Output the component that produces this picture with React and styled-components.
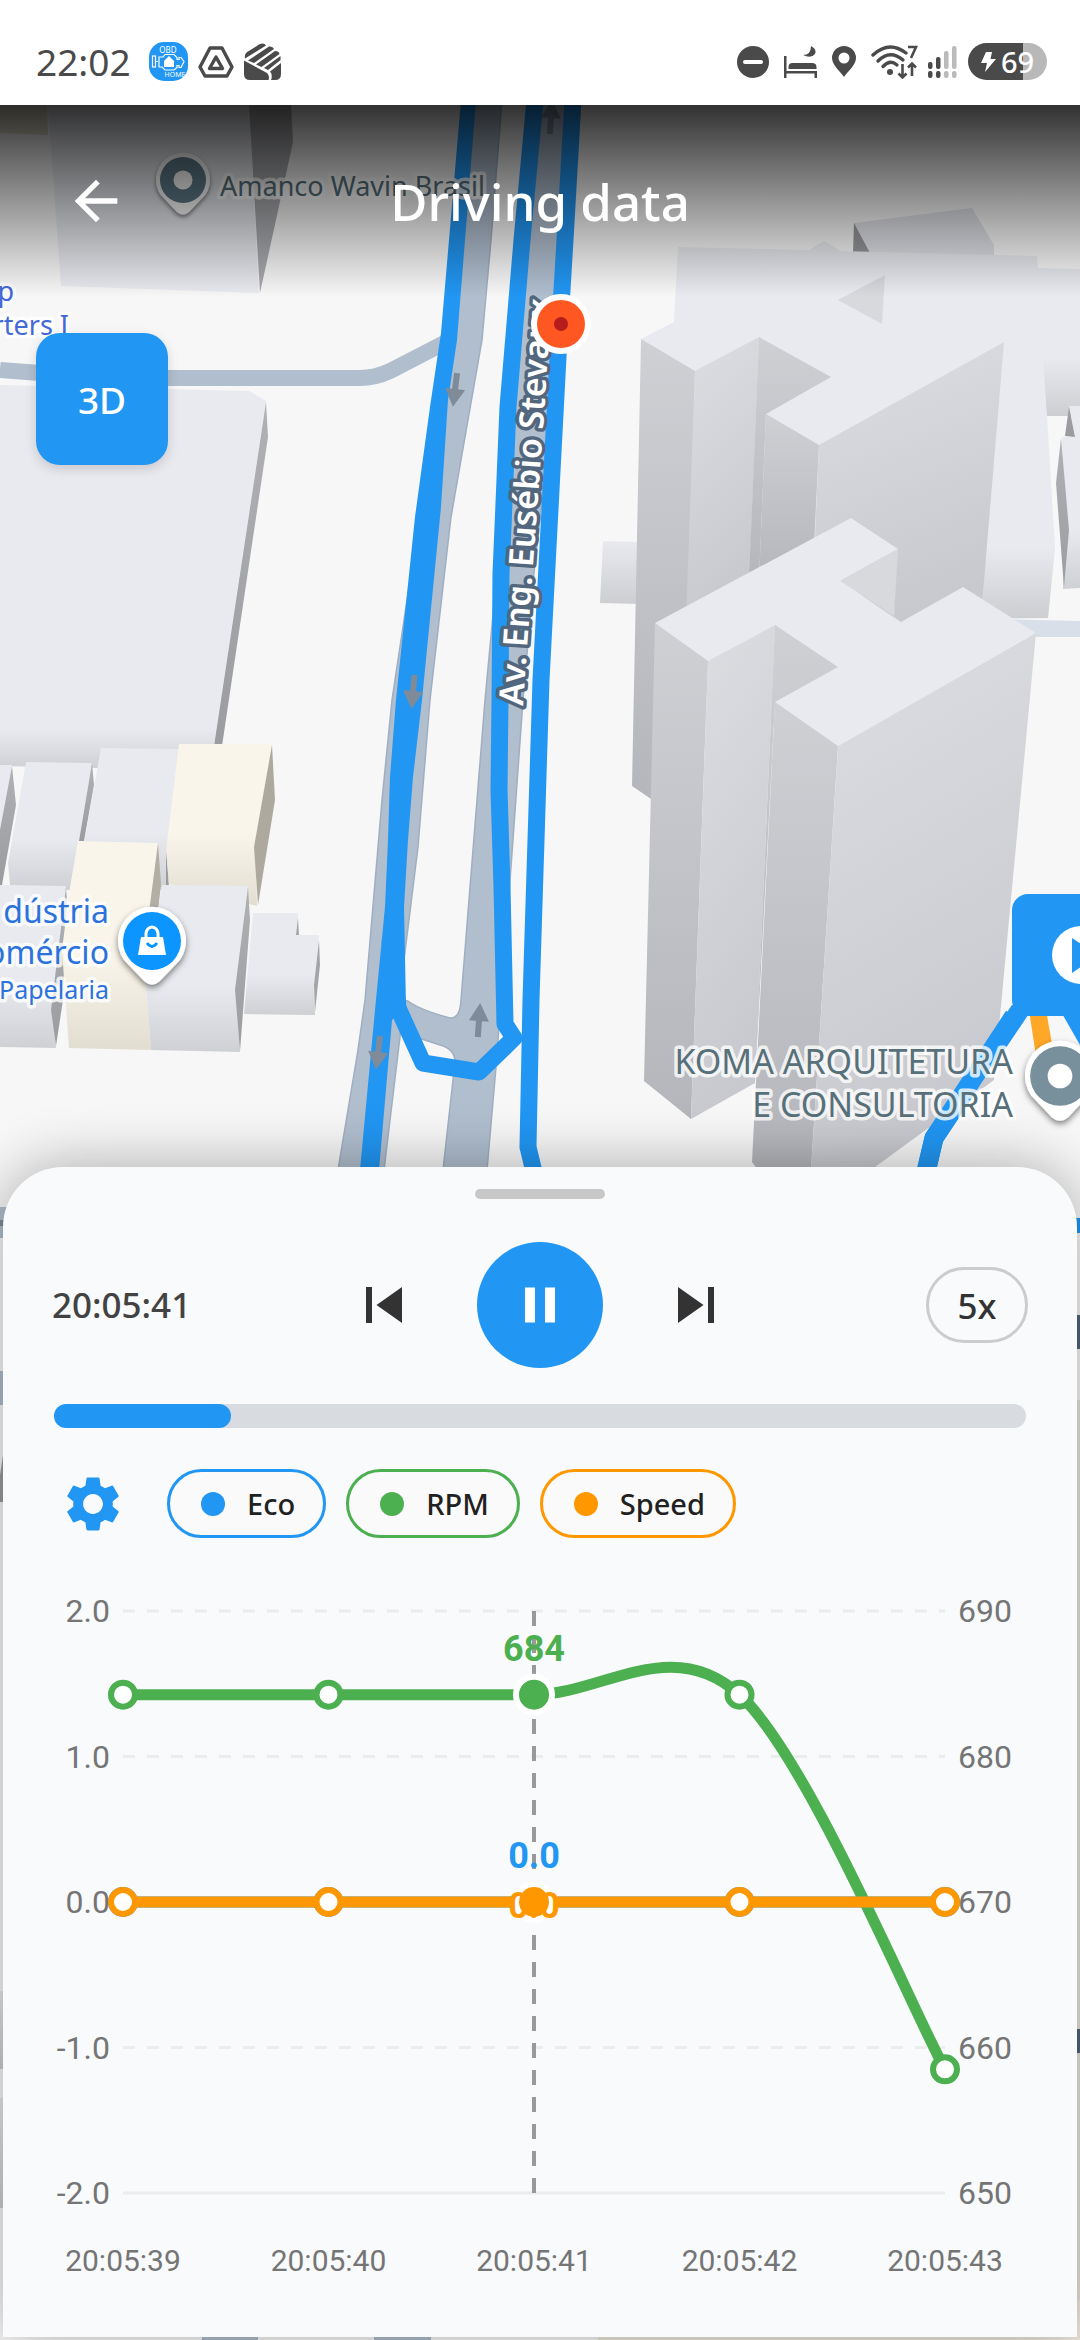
import React, { useState } from 'react';
import styled, { createGlobalStyle } from 'styled-components';
import { MdArrowBack, MdPause, MdPlayArrow, MdSettings, MdSkipNext, MdSkipPrevious } from 'react-icons/md';

const BLUE = '#2196f3';
const GREEN = '#4caf50';
const ORANGE = '#ff9800';

// -----------------------------------------------------------------------------------------
// ------------------------------------- Status bar ----------------------------------------
// -----------------------------------------------------------------------------------------

const ObdIcon = () => (
  <svg width="39" height="39" viewBox="0 0 39 39" aria-hidden="true">
    <rect width="39" height="39" rx="15" fill={BLUE} />
    <g fill="none" stroke="#fff" strokeWidth="1.2">
      <rect x="3.5" y="14" width="3" height="11" />
      <path d="M7 19.5h2M10 15h4l2-2.500h9l3 3v2h2v-2h2l3 4-3 6h-2v-2h-2v2l-3 2.500H16l-3-3h-3z" />
    </g>
    <path d="M20 14l5 5v6H15v-6z" fill="#fff" />
    <text x="19" y="10.500" textAnchor="middle" fontSize="8" fill="#fff">OBD</text>
    <text x="26" y="35" textAnchor="middle" fontSize="7" fill="#fff">HOME</text>
  </svg>
);

const DriveIcon = () => (
  <svg width="36" height="32" viewBox="0 0 36 32" fill="none" stroke="#4a4a4a" strokeLinejoin="round" aria-hidden="true">
    <path d="M12 2h12l10 19-5 9H7L2 21z" strokeWidth="3.400" />
    <path d="M18 11l6.500 11.500h-13z" strokeWidth="3.400" />
  </svg>
);

const HandIcon = () => (
  <svg width="37" height="37" viewBox="0 0 37 37" fill="#4a4a4a" aria-hidden="true">
    <path d="M1 15.500Q0 11 4 8.500L15 1.500q5-2.500 7 1z" />
    <path d="M4 17.500L25 3.500q4-.5 5 2.500L10 20z" />
    <path d="M12 21.500L31 8q4 0 4.500 3L17.500 24z" />
    <path d="M20 25L36.500 13v4L24 27z" />
    <path d="M0 17.500L23 30q3 3 1.500 7H6q-6 0-6-6z" />
    <path d="M26 28.500L37 20v11q0 6-6 6h-4q2-5-1-8.500z" />
  </svg>
);

const DndIcon = () => (
  <svg width="32" height="32" viewBox="0 0 32 32" aria-hidden="true">
    <circle cx="16" cy="16" r="16" fill="#4a4a4a" />
    <rect x="6" y="14" width="20" height="4" rx="2" fill="#fff" />
  </svg>
);

const BedIcon = () => (
  <svg width="33" height="32" viewBox="0 0 33 32" fill="#4a4a4a" aria-hidden="true">
    <path d="M0 10h2.500v15H33v7h-2.500v-4.500h-28V32H0z" />
    <path d="M4.500 23v-2q0-4 4-4H28q4.500 0 4.500 4v2z" />
    <path d="M27 0q6 3 4 8-4 5-12 1 8 0 8-9z" />
  </svg>
);

const PinIcon = () => (
  <svg width="24" height="31" viewBox="0 0 24 31" aria-hidden="true">
    <path d="M12 0a12 12 0 0 1 12 12c0 7-8 13-12 19C8 25 0 19 0 12A12 12 0 0 1 12 0z" fill="#4a4a4a" />
    <circle cx="12" cy="12" r="5.500" fill="#fff" />
  </svg>
);

const WifiIcon = () => (
  <svg width="47" height="36" viewBox="0 0 47 36" fill="none" stroke="#4a4a4a" aria-hidden="true">
    <g strokeWidth="3.400" strokeLinecap="round">
      <path d="M2 11Q18-4 35 9" />
      <path d="M7 17Q19 5 32 16" />
      <path d="M12 22.500Q19 15 26 21" />
    </g>
    <circle cx="19" cy="28" r="3" fill="#4a4a4a" stroke="none" />
    <path d="M37 3h8l-5 11" strokeWidth="2.600" />
    <path d="M31.500 20v13M27.500 29.500l4 4 4-4M41 32V20M37 23.500l4-4 4 4" strokeWidth="2.600" />
  </svg>
);

const SIGNAL_BARS = [
  { x: 0, top: 16, color: '#4a4a4a' },
  { x: 8, top: 11, color: '#4a4a4a' },
  { x: 16, top: 5, color: '#bababa' },
  { x: 24, top: 0, color: '#bababa' },
];

const SignalIcon = () => (
  <svg width="30" height="32" viewBox="0 0 30 32" aria-hidden="true">
    {SIGNAL_BARS.map(({ x, top, color }) => (
      <g key={x} fill={color}>
        <rect x={x} y={top} width="4.500" height={23 - top} rx="2" />
        <rect x={x} y="25" width="4.500" height="7" rx="2" />
      </g>
    ))}
  </svg>
);

const StatusBar = () => (
  <StatusWrapper>
    <StatusLeft>
      <Clock>22:02</Clock>
      <ObdIcon />
      <DriveIcon />
      <HandIcon />
    </StatusLeft>
    <StatusRight>
      <DndIcon />
      <BedIcon />
      <PinIcon />
      <Connectivity>
        <WifiIcon />
        <SignalIcon />
        <Battery>
          <svg width="15" height="20" viewBox="0 0 15 20" fill="#fff" aria-hidden="true">
            <path d="M5 0h6L9.500 7H15L4 20l2-9H0z" />
          </svg>
          69
        </Battery>
      </Connectivity>
    </StatusRight>
  </StatusWrapper>
);

// -----------------------------------------------------------------------------------------
// ----------------------------------------- Map -------------------------------------------
// -----------------------------------------------------------------------------------------

const ROOF = '#e8eaef';

const ARROWS = [
  { x: 455, y: 390, turn: 187 },
  { x: 413, y: 692, turn: 185 },
  { x: 378, y: 1053, turn: 187 },
  { x: 479, y: 1020, turn: 4 },
  { x: 551, y: 117, turn: 4 },
];

const PlacePin = ({ x, y, r, color, children }) => (
  <g transform={`translate(${x} ${y}) scale(${r / 34})`} filter="url(#pinShadow)">
    <path d="M-28 19A34 34 0 1 1 28 19L8 40Q0 47-8 40z" fill="#fff" />
    <circle r="29" fill={color} />
    {children}
  </g>
);

const Map = () => (
  <MapCanvas viewBox="0 105 1080 2235" preserveAspectRatio="xMidYMin slice" role="img" aria-label="Route map">
    <defs>
      <linearGradient id="frontFace" x1="0" y1="0" x2="0" y2="1">
        <stop offset="0.6" stopColor={ROOF} />
        <stop offset="1" stopColor="#cfd0d4" />
      </linearGradient>
      <linearGradient id="bigFront" x1="0" y1="0" x2="0" y2="1">
        <stop offset="0.9" stopColor={ROOF} />
        <stop offset="1" stopColor="#cfd0d4" />
      </linearGradient>
      <linearGradient id="creamFace" x1="0" y1="0" x2="0" y2="1">
        <stop offset="0.55" stopColor="#f9f5ea" />
        <stop offset="1" stopColor="#e2ddd1" />
      </linearGradient>
      <linearGradient id="shade" x1="0" y1="0" x2="0" y2="1">
        <stop offset="0" stopColor={ROOF} />
        <stop offset="1" stopColor="#cdced2" />
      </linearGradient>
      <linearGradient id="sideWall" x1="0" y1="0" x2="0" y2="1">
        <stop offset="0" stopColor="#b0b1b5" />
        <stop offset="1" stopColor="#9b9ca0" />
      </linearGradient>
      <linearGradient id="towerDark" x1="0" y1="0" x2="0" y2="1">
        <stop offset="0" stopColor="#cfd0d4" />
        <stop offset="1" stopColor="#b5b6bb" />
      </linearGradient>
      <linearGradient id="towerLight" x1="0" y1="0" x2="0.25" y2="1">
        <stop offset="0" stopColor="#dddee2" />
        <stop offset="1" stopColor="#c8c9ce" />
      </linearGradient>
      <filter id="pinShadow" x="-30%" y="-30%" width="160%" height="160%">
        <feDropShadow dx="0" dy="3" stdDeviation="3" floodOpacity="0.5" />
      </filter>
      <path id="avenue" d="M523 706L533 565L543 430L552 290" />
    </defs>
    <rect y="105" width="1080" height="2235" fill="#f7f7f7" />

    {/* blocks that stay mostly under the sheet */}
    <rect x="1040" y="1400" width="40" height="940" fill="#e9e5da" />
    <rect x="598" y="2300" width="482" height="40" fill="#efe9dc" />
    <rect x="0" y="1207" width="60" height="31" fill="#b0bece" />
    <rect x="0" y="1220" width="60" height="6" fill="#7f8b99" />
    <rect x="0" y="1371" width="60" height="34" fill="#b0bece" />
    <path d="M0 1475L3 1455V1502H0z" fill="#9b9ca0" />
    <rect x="0" y="1991" width="30" height="78" fill="url(#shade)" />
    <rect x="0" y="2098" width="30" height="110" fill="url(#shade)" />
    <path d="M202 2300h56v40h-56zM374 2300h57v40h-57z" fill="#b0bece" />
    <rect x="1040" y="1218" width="40" height="15" fill={BLUE} />
    <rect x="1040" y="1315" width="40" height="34" fill="#52667d" />
    <rect x="1040" y="2029" width="40" height="24" fill="#52667d" />

    {/* roads */}
    <path d="M0 370L40 373L168 378H360Q375 378 390 371L450 340" fill="none" stroke="#b0bece" strokeWidth="16" />
    <g fill="#b0bece" stroke="#9fafc1" strokeWidth="1.500">
      <path d="M465 100L502 100L491 240L482 340L451 517L430 700L418 847L404 960L400 1037L384 1170H338L358 1050L365 1000L382 800L392 700L416 540L442 400z" />
      <path d="M530 100H566L559 240L553 400L534 573L523 700L511 867L496 1067L487 1170H443L455 1062Q455 1049 440 1045L400 1032V1000L408 1001Q420 1010 450 1018Q460 1019 461 1000L485 700L500 540L518 240z" />
    </g>
    <path d="M1000 619L1080 621V637H1000z" fill="#d9dfe9" />

    {/* recorded route */}
    <g fill="none" stroke={BLUE} strokeLinejoin="round">
      <path d="M535 100L522 240L508 407L503 527L501 573L500 700L499 790L502 887L505 1024L514 1038L479 1072L423 1063L398 1008L390 940" strokeWidth="17" />
      <path d="M573 100L565 240L558 357L541 680L531 1000L528 1147L534 1172" strokeWidth="17" />
      <path d="M1020 1010L934 1138L926 1172" strokeWidth="19" />
    </g>
    <path d="M461 100H476L465 240L457 340L448 400L441 507L422 700L413 777L408 840L404 907L406 1007L392 1020L379 1170H360L375 1010L385 907L388 840L390 777L396 700L415 517L430 407L441 333L449 240z" fill={BLUE} />
    <path d="M1029 1010H1046L1053 1050L1036 1056z" fill="#ffa726" />
    <path d="M1060 1010H1080V1045z" fill={BLUE} />
    {ARROWS.map(({ x, y, turn }) => (
      <path key={y} d="M0-17L10 1H3V17H-3V1H-10z" transform={`translate(${x} ${y}) rotate(${turn})`} fill="#7f8b99" />
    ))}

    {/* buildings on the left */}
    <path d="M0 105H47L48 135L0 133z" fill="#e0dac6" />
    <path d="M48 105H249L259 293L61 286z" fill={ROOF} />
    <path d="M249 105H291L293 142L260 293z" fill="#a9aaae" />
    <path d="M0 385L249 391L266 401L214 744L98 768L0 766z" fill="url(#bigFront)" />
    <path d="M266 402L268 437L222 746H214z" fill="url(#sideWall)" />
    <path d="M0 765H12L0 885z" fill={ROOF} />
    <path d="M12 766L16 805L2 885H0V830z" fill="url(#sideWall)" />
    <path d="M26 762L92 763L79 841L70 890L10 885L8 863z" fill="url(#frontFace)" />
    <path d="M92 763L94 785L84 841H79z" fill="url(#sideWall)" />
    <path d="M101 748L179 749L168 890L160 890L158 843H84z" fill="url(#frontFace)" />
    <path d="M166 845L169 889H166z" fill="#9b9ca0" />
    <path d="M179 744H272L255 847L257 906L169 884L166 850z" fill="url(#creamFace)" />
    <path d="M272 745L275 800L258 905L254 847z" fill="#aea99f" />
    <path d="M0 885L66 886L52 1010L56 1048L0 1047z" fill="url(#frontFace)" />
    <path d="M66 887L67 900L63 1000L56 1046L51 1010z" fill="url(#sideWall)" />
    <path d="M78 841L158 843L146 987L151 1050L69 1048L62 950L70 887z" fill="url(#creamFace)" />
    <path d="M158 843L161 884L158 912H149z" fill="#b4afa5" />
    <path d="M162 885L248 886L236 993L240 1052L151 1050L146 987z" fill="url(#frontFace)" />
    <path d="M253 913H298V935H319L314 990L315 1015L244 1014z" fill="url(#frontFace)" />
    <path d="M248 887L250 920L240 1051L235 990z" fill="url(#sideWall)" />
    <path d="M298 918L299 935H296zM319 940L320 965L315 1012L314 985z" fill="#a3a4a8" />

    {/* towers on the right */}
    <path d="M854 223L972 208L994 245V260L868 256z" fill="#e0e1e7" />
    <path d="M854 223L870 253H853z" fill="#94959a" />
    <path d="M603 541L640 542V604L600 603z" fill="url(#shade)" />
    <path d="M678 247L809 250L824 241L841 251L1037 256L1038 268L1080 269V416H1047L1055 547L1048 618L1015 619L960 610L700 600L641 339L674 322z" fill={ROOF} />
    <path d="M1043 357H1080V416H1047z" fill="url(#shade)" />
    <path d="M985 547H1055L1048 618H982z" fill="url(#shade)" />
    <path d="M1069 406H1080V437H1075z" fill={ROOF} />
    <path d="M1069 407L1075 437L1065 436z" fill="#9b9ca0" />
    <path d="M1062 437H1080V588L1063 589z" fill="url(#frontFace)" />
    <path d="M1061 438L1069 530L1064 587L1056 483z" fill="url(#sideWall)" />
    <path d="M838 300L885 275L882 324z" fill="#d8d9dd" />
    <path d="M641 339L695 371L688 640L651 799L632 786z" fill="url(#towerDark)" />
    <path d="M695 371L759 337L749 590L686 620z" fill="url(#towerLight)" />
    <path d="M759 337L831 377L766 414L759 580L749 580z" fill="url(#towerDark)" />
    <path d="M766 414L819 445L814 545L759 580z" fill="url(#towerDark)" />
    <path d="M819 445L1004 342L982 605L902 625L814 560z" fill="url(#towerLight)" />
    <path d="M655 623L851 518L898 549L840 581L901 622L963 587L1036 633L838 746L700 700z" fill={ROOF} />
    <path d="M898 549L894 616L840 581z" fill="#d8d9dd" />
    <path d="M655 623L708 661L691 1119L644 1081z" fill="url(#towerDark)" />
    <path d="M708 661L775 625L755 1083L691 1119z" fill="url(#towerLight)" />
    <path d="M775 625L838 667L775 702L755 1083z" fill="url(#towerDark)" />
    <path d="M775 702L838 746L811 1170H758L752 1162z" fill="url(#towerDark)" />
    <path d="M838 746L1036 633L994 1080L871 1170H811z" fill="url(#towerLight)" />
    <path d="M1014 1016L934 1138L926 1172" fill="none" stroke={BLUE} strokeWidth="19" />

    {/* labels */}
    <StreetLabel>
      <textPath href="#avenue">Av. Eng. Eusébio Stevaux</textPath>
    </StreetLabel>
    <MapLabel $size={27} $color="#57707a" x="220" y="196">Amanco Wavin Brasil</MapLabel>
    <MapLabel $size={27} $color="#4468d6" x="14" y="301" textAnchor="end">p</MapLabel>
    <MapLabel $size={27} $color="#4468d6" x="69" y="335" textAnchor="end">rters I</MapLabel>
    <MapLabel $size={32} $color="#2b72dc" x="109" y="923" textAnchor="end">dústria</MapLabel>
    <MapLabel $size={32} $color="#2b72dc" x="109" y="964" textAnchor="end">omércio</MapLabel>
    <MapLabel $size={25} $color="#2b72dc" x="109" y="999" textAnchor="end">Papelaria</MapLabel>
    <MapLabel $size={34} $color="#57707a" x="1013" y="1074" textAnchor="end">KOMA ARQUITETURA</MapLabel>
    <MapLabel $size={34} $color="#57707a" x="1013" y="1117" textAnchor="end">E CONSULTORIA</MapLabel>

    {/* markers */}
    <PlacePin x={183} y={180} r={27} color="#607d8b">
      <circle r="12" fill="#fff" />
    </PlacePin>
    <PlacePin x={152} y={941} r={34} color="#0a95ff">
      <path d="M-11-4H11L14 14H-14z" fill="#fff" />
      <path d="M-6-3V-7a6 7 0 0 1 12 0V-3" fill="none" stroke="#fff" strokeWidth="3" />
      <path d="M-5 2Q0 9 5 2" fill="none" stroke="#0a95ff" strokeWidth="3" />
    </PlacePin>
    <rect x="1012" y="894" width="138" height="122" rx="16" fill={BLUE} />
    <circle cx="1081" cy="955" r="29" fill="#fff" />
    <path d="M1072 938L1098 955L1072 973z" fill={BLUE} />
    <PlacePin x={1060} y={1076} r={35} color="#78909c">
      <circle r="12" fill="#fff" />
    </PlacePin>
    <circle cx="561" cy="324" r="30" fill="#fff" />
    <circle cx="561" cy="324" r="24" fill="#ff5722" />
    <circle cx="561" cy="324" r="7" fill="#b71c1c" />
  </MapCanvas>
);

// -----------------------------------------------------------------------------------------
// ---------------------------------------- Chart ------------------------------------------
// -----------------------------------------------------------------------------------------

const TIMES = ['20:05:39', '20:05:40', '20:05:41', '20:05:42', '20:05:43'];
const LEFT_TICKS = ['2.0', '1.0', '0.0', '-1.0', '-2.0'];
const RIGHT_TICKS = [690, 680, 670, 660, 650];
const PLOT = { left: 120, right: 942, top: 24, bottom: 606 };
const SMOOTHNESS = 0.33;
const CURSOR = 2;

const colX = (i) => PLOT.left + ((PLOT.right - PLOT.left) / 4) * i;
const rowY = (i) => PLOT.top + ((PLOT.bottom - PLOT.top) / 4) * i;
const scaleY = (value, min, max) => PLOT.bottom - ((value - min) / (max - min)) * (PLOT.bottom - PLOT.top);

const SERIES = [
  { id: 'eco', label: '0.0', labelDy: -34, color: BLUE, values: [0, 0, 0, 0, 0], min: -2, max: 2 },
  { id: 'rpm', label: '684', labelDy: -34, color: GREEN, values: [684.25, 684.25, 684.25, 684.25, 658.5], min: 650, max: 690 },
  { id: 'speed', label: '0.0', labelDy: 16, color: ORANGE, values: [0, 0, 0, 0, 0], min: -2, max: 2 },
];

const curve = (points) => {
  const pull = (i) => {
    const prev = points[i - 1] || points[i];
    const next = points[i + 1] || points[i];
    return { x: ((next.x - prev.x) / 2) * SMOOTHNESS, y: ((next.y - prev.y) / 2) * SMOOTHNESS };
  };
  return points.reduce((d, p, i) => {
    if (i === 0) return `M${p.x} ${p.y}`;
    const before = points[i - 1];
    const a = pull(i - 1);
    const b = pull(i);
    return `${d}C${before.x + a.x} ${before.y + a.y} ${p.x - b.x} ${p.y - b.y} ${p.x} ${p.y}`;
  }, '');
};

const Chart = () => {
  const lines = SERIES.map((s) => ({
    ...s,
    points: s.values.map((value, i) => ({ x: colX(i), y: scaleY(value, s.min, s.max) })),
  }));

  return (
    <ChartCanvas viewBox="0 0 1074 700" role="img" aria-label="Eco, RPM and Speed over time">
      {LEFT_TICKS.map((tick, i) => (
        <g key={tick}>
          <line
            x1={PLOT.left}
            x2={PLOT.right}
            y1={rowY(i)}
            y2={rowY(i)}
            stroke="#ebecec"
            strokeWidth="3"
            strokeDasharray={i === 4 ? undefined : '12 12'}
          />
          <AxisLabel x="107" y={rowY(i) + 11} textAnchor="end">{tick}</AxisLabel>
          <AxisLabel x="955" y={rowY(i) + 11}>{RIGHT_TICKS[i]}</AxisLabel>
        </g>
      ))}
      {TIMES.map((time, i) => (
        <AxisLabel key={time} $small x={colX(i)} y="684" textAnchor="middle">{time}</AxisLabel>
      ))}
      {lines.map(({ id, color, points }) => (
        <g key={id}>
          <path d={curve(points)} fill="none" stroke={color} strokeWidth="11" />
          {points.map((p, i) => i !== CURSOR && (
            <circle key={p.x} cx={p.x} cy={p.y} r="12" fill="#fff" stroke={color} strokeWidth="6" />
          ))}
        </g>
      ))}
      <line
        x1={colX(CURSOR)}
        x2={colX(CURSOR)}
        y1={PLOT.top}
        y2={PLOT.bottom}
        stroke="#999"
        strokeWidth="4"
        strokeDasharray="15 12"
      />
      {lines.map(({ id, color, points }) => (
        <circle key={id} cx={points[CURSOR].x} cy={points[CURSOR].y} r="18" fill={color} stroke="#fff" strokeWidth="6" />
      ))}
      {lines.map(({ id, color, label, labelDy, points }) => (
        <ValueLabel key={id} x={points[CURSOR].x} y={points[CURSOR].y + labelDy} fill={color} textAnchor="middle">
          {label}
        </ValueLabel>
      ))}
    </ChartCanvas>
  );
};

// -----------------------------------------------------------------------------------------
// ----------------------------------------- App -------------------------------------------
// -----------------------------------------------------------------------------------------

const CHIPS = [
  { name: 'Eco', color: BLUE },
  { name: 'RPM', color: GREEN },
  { name: 'Speed', color: ORANGE },
];

const App = () => {
  const [playing, setPlaying] = useState(true);
  const [position, setPosition] = useState(161);

  return (
    <Page>
      <GlobalStyle />
      <StatusBar />
      <Stage>
        <Map />
        <Header>
          <IconButton type="button" aria-label="Back">
            <MdArrowBack size={64} color="#fff" />
          </IconButton>
          <Title>Driving data</Title>
        </Header>
        <ViewButton type="button">3D</ViewButton>
        <Sheet>
          <Handle />
          <Player>
            <CurrentTime>20:05:41</CurrentTime>
            <Transport>
              <IconButton type="button" aria-label="Previous">
                <MdSkipPrevious size={72} />
              </IconButton>
              <PlayButton type="button" aria-label={playing ? 'Pause' : 'Play'} onClick={() => setPlaying(!playing)}>
                {playing ? <MdPause size={60} /> : <MdPlayArrow size={60} />}
              </PlayButton>
              <IconButton type="button" aria-label="Next">
                <MdSkipNext size={72} />
              </IconButton>
            </Transport>
            <SpeedButton type="button">5x</SpeedButton>
          </Player>
          <Progress
            type="range"
            min="0"
            max="1000"
            value={position}
            aria-label="Playback position"
            style={{ '--done': position / 1000 }}
            onChange={(e) => setPosition(Number(e.target.value))}
          />
          <Filters>
            <SettingsButton type="button" aria-label="Settings">
              <MdSettings size={66} />
            </SettingsButton>
            <Chips>
              {CHIPS.map(({ name, color }) => (
                <Chip key={name} type="button" $color={color}>{name}</Chip>
              ))}
            </Chips>
          </Filters>
          <Chart />
        </Sheet>
      </Stage>
    </Page>
  );
};

// -----------------------------------------------------------------------------------------
// ---------------------------------- Styled Components ------------------------------------
// -----------------------------------------------------------------------------------------

const GlobalStyle = createGlobalStyle`
  * {
    box-sizing: border-box;
  }
  body {
    margin: 0;
    font-family: 'Noto Sans', 'Open Sans', sans-serif;
  }
  button {
    font-family: inherit;
    cursor: pointer;
  }
  svg {
    display: block;
  }
`;

const Page = styled.div`
  display: flex;
  flex-direction: column;
  min-height: 100vh;
  background: #fff;
`;

const StatusWrapper = styled.div`
  display: flex;
  justify-content: space-between;
  align-items: center;
  height: 105px;
  padding: 18px 33px 0 36px;
  color: #4a4a4a;
`;

const StatusLeft = styled.div`
  display: flex;
  align-items: center;
  gap: 10px;
`;

const Clock = styled.span`
  margin-right: 8px;
  font-size: 37px;
  line-height: 40px;
`;

const StatusRight = styled.div`
  display: flex;
  align-items: center;
  gap: 15px;
`;

const Connectivity = styled.div`
  display: flex;
  align-items: center;
  gap: 10px;
`;

const Battery = styled.span`
  display: flex;
  align-items: center;
  justify-content: center;
  gap: 5px;
  width: 79px;
  height: 37px;
  border-radius: 19px;
  background: linear-gradient(to right, #4a4a4a 69%, #b8b8b8 69%);
  color: #fff;
  font-size: 29px;
  line-height: 37px;
  font-weight: 500;
`;

const Stage = styled.main`
  position: relative;
  display: flex;
  flex-direction: column;
  flex: 1;
  overflow: hidden;
`;

const MapCanvas = styled.svg`
  position: absolute;
  inset: 0;
  width: 100%;
  height: 100%;
`;

const MapLabel = styled.text`
  font-size: ${({ $size }) => $size}px;
  fill: ${({ $color }) => $color};
  stroke: rgba(255, 255, 255, 0.8);
  stroke-width: 7px;
  stroke-linejoin: round;
  paint-order: stroke;
`;

const StreetLabel = styled.text`
  font-size: 34px;
  font-weight: 600;
  fill: #fff;
  stroke: #52667d;
  stroke-width: 7px;
  stroke-linejoin: round;
  paint-order: stroke;
`;

const Header = styled.header`
  position: relative;
  display: grid;
  grid-template-columns: 1fr auto 1fr;
  align-items: center;
  height: 192px;
  padding: 0 64px;
  background: linear-gradient(rgba(0, 0, 0, 0.8), rgba(0, 0, 0, 0));
`;

const Title = styled.h1`
  margin: 0;
  color: #fff;
  font-size: 51px;
  line-height: 64px;
  font-weight: 500;
`;

const IconButton = styled.button`
  justify-self: start;
  padding: 0;
  border: 0;
  background: none;
  color: #333;
`;

const ViewButton = styled.button`
  position: relative;
  align-self: flex-start;
  width: 132px;
  height: 132px;
  margin: 36px;
  padding: 0;
  border: 0;
  border-radius: 24px;
  background: ${BLUE};
  box-shadow: 0 4px 12px rgba(0, 0, 0, 0.15);
  color: #fff;
  font-size: 37px;
  font-weight: 500;
`;

const Sheet = styled.section`
  position: relative;
  display: flex;
  flex-direction: column;
  margin: auto 3px 3px;
  padding: 22px 0 50px;
  border-radius: 60px 60px 0 0;
  background: #f8fafc;
  box-shadow: 0 0 60px rgba(0, 0, 0, 0.32);
`;

const Handle = styled.div`
  align-self: center;
  width: 130px;
  height: 10px;
  border-radius: 5px;
  background: #c8c8c8;
`;

const Player = styled.div`
  display: grid;
  grid-template-columns: 1fr auto 1fr;
  align-items: center;
  margin-top: 43px;
  padding: 0 49px;
`;

const CurrentTime = styled.span`
  color: #424242;
  font-size: 35px;
  line-height: 48px;
  font-weight: 500;
`;

const Transport = styled.div`
  display: flex;
  align-items: center;
  gap: 57px;
`;

const PlayButton = styled.button`
  display: grid;
  place-items: center;
  width: 126px;
  height: 126px;
  padding: 0;
  border: 0;
  border-radius: 50%;
  background: ${BLUE};
  color: #fff;
`;

const SpeedButton = styled.button`
  justify-self: end;
  width: 102px;
  height: 76px;
  padding: 0;
  border: 3px solid #ccc;
  border-radius: 38px;
  background: none;
  color: #333;
  font-size: 35px;
  font-weight: 500;
`;

const Progress = styled.input`
  appearance: none;
  height: 24px;
  margin: 36px 51px 0;
  border-radius: 12px;
  background: linear-gradient(${BLUE}, ${BLUE}) no-repeat #d8dbe0;
  background-size: calc(12px + (100% - 24px) * var(--done)) 100%;

  &::-webkit-slider-thumb {
    appearance: none;
    width: 24px;
    height: 24px;
    border-radius: 50%;
    background: ${BLUE};
  }
`;

const Filters = styled.div`
  display: flex;
  align-items: center;
  gap: 34px;
  margin-top: 41px;
  padding: 0 50px;
`;

const SettingsButton = styled.button`
  display: grid;
  place-items: center;
  width: 80px;
  padding: 0;
  border: 0;
  background: none;
  color: ${BLUE};
`;

const Chips = styled.div`
  display: flex;
  gap: 20px;
`;

const Chip = styled.button`
  display: flex;
  align-items: center;
  gap: 22px;
  height: 69px;
  padding: 0 28px 0 31px;
  border: 3px solid ${({ $color }) => $color};
  border-radius: 35px;
  background: #fafafa;
  color: #212121;
  font-size: 29px;
  font-weight: 500;

  &::before {
    content: '';
    width: 24px;
    height: 24px;
    border-radius: 50%;
    background: ${({ $color }) => $color};
  }
`;

const ChartCanvas = styled.svg`
  width: 100%;
  height: auto;
  margin-top: 49px;
  font-family: Roboto, 'Liberation Sans', sans-serif;
`;

const AxisLabel = styled.text`
  font-size: ${({ $small }) => ($small ? 30 : 32)}px;
  fill: #757575;
`;

const ValueLabel = styled.text`
  font-size: 36px;
  font-weight: 700;
`;

export default App;
